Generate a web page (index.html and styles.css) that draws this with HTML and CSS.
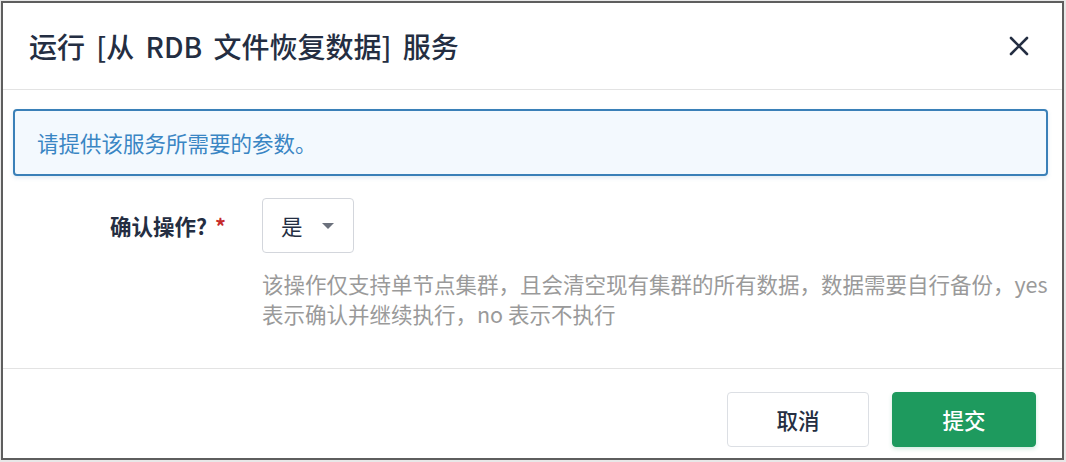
FILE: index.html
```html
<!DOCTYPE html>
<html>
<head>
  <meta charset="UTF-8" />
  <title>运行服务</title>
  <link rel="stylesheet" href="styles.css">
</head>
<body>
  <div class="dialog">
    <header class="dialog-head">
      <h1>运行 [从 RDB 文件恢复数据] 服务</h1>
      <button class="close" aria-label="关闭">
        <svg viewBox="0 0 20 20" width="20" height="20">
          <path d="M2 2 L18 18 M18 2 L2 18" stroke="#242e42" stroke-width="2.6" stroke-linecap="round" fill="none"/>
        </svg>
      </button>
    </header>

    <main class="dialog-body">
      <div class="alert">请提供该服务所需要的参数。</div>

      <div class="field">
        <label class="field-label">确认操作?<span class="req">*</span></label>
        <div class="field-control">
          <div class="select">
            <span>是</span>
            <span class="caret"></span>
          </div>
          <p class="help">该操作仅支持单节点集群，且会清空现有集群的所有数据，数据需要自行备份，yes 表示确认并继续执行，no 表示不执行</p>
        </div>
      </div>
    </main>

    <footer class="dialog-foot">
      <button class="btn">取消</button>
      <button class="btn btn-primary">提交</button>
    </footer>
  </div>
</body>
</html>
```

FILE: styles.css
```css
* {
  box-sizing: border-box;
}
body {
  margin: 0;
  padding: 1px 0 0 1px;
  background: #e8e8e8;
  font-family: "Noto Sans CJK SC", "Noto Sans", sans-serif;
  color: #242e42;
}
.dialog {
  width: 1063px;
  height: 459px;
  border: 2px solid #5e5e5e;
  background: #fff;
  display: flex;
  flex-direction: column;
}
.dialog-head {
  height: 87px;
  border-bottom: 1px solid #e3e3e3;
  display: flex;
  align-items: center;
  justify-content: space-between;
  padding: 0 33px 0 26px;
}
.dialog-head h1 {
  margin: 0;
  font-size: 28px;
  font-weight: 500;
  color: #242e42;
  word-spacing: 5px;
}
.close {
  border: 0;
  background: none;
  padding: 0;
  width: 20px;
  height: 20px;
  display: flex;
}
.dialog-body {
  flex: 1;
  padding: 19px 14px 0 10px;
}
.alert {
  height: 67px;
  border: 2px solid #3a80b8;
  border-radius: 4px;
  background: #f3f9fe;
  color: #3a86c4;
  font-size: 21.5px;
  display: flex;
  align-items: center;
  padding-left: 22px;
  box-shadow: 0 2px 4px rgba(58, 128, 184, 0.15);
}
.field {
  display: flex;
  margin-top: 22px;
}
.field-label {
  width: 213px;
  text-align: right;
  font-size: 21.5px;
  font-weight: 700;
  line-height: 55px;
  color: #242e42;
}
.req {
  color: #c62b2b;
  margin-left: 8px;
}
.field-control {
  margin-left: 36px;
  flex: 1;
}
.select {
  width: 92px;
  height: 55px;
  border: 1px solid #d3d6dc;
  border-radius: 4px;
  display: flex;
  align-items: center;
  justify-content: space-between;
  padding: 0 19px 0 18px;
  font-size: 21.5px;
  color: #242e42;
}
.caret {
  width: 0;
  height: 0;
  border-left: 6px solid transparent;
  border-right: 6px solid transparent;
  border-top: 6px solid #6b717c;
}
.help {
  margin: 16px 0 0;
  font-size: 21.5px;
  line-height: 30px;
  color: #9a9a9a;
  margin-right: -6px;
}
.dialog-foot {
  height: 90px;
  border-top: 1px solid #e3e3e3;
  display: flex;
  justify-content: flex-end;
  align-items: flex-start;
  gap: 23px;
  padding: 23px 26px 0 0;
}
.btn {
  height: 55px;
  width: 142px;
  border: 1px solid #dcdfe4;
  border-radius: 4px;
  background: #fff;
  font-family: inherit;
  font-size: 21.5px;
  font-weight: 500;
  color: #242e42;
}
.btn-primary {
  width: 144px;
  border-color: #1e9a5e;
  background: #1e9a5e;
  color: #fff;
  box-shadow: 0 2px 4px rgba(30, 154, 94, 0.2);
}
```
